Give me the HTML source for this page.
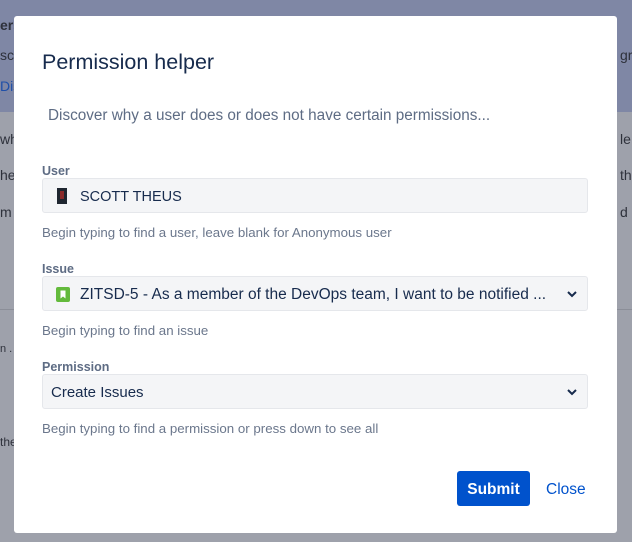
<!DOCTYPE html>
<html><head><style>
*{margin:0;padding:0;box-sizing:border-box}
body{width:632px;height:542px;overflow:hidden;font-family:"Liberation Sans",sans-serif;background:#9ea1ab;position:relative}
.top{position:absolute;left:0;top:0;width:632px;height:112px;background:#7f87a5}
.line{position:absolute;left:0;top:309px;width:632px;height:1px;background:#8b8e98}
.bg{position:absolute;font-size:14px;color:#2e313b}
.modal{position:absolute;left:14px;top:16px;width:603px;height:517px;background:#fff;border-radius:3px}
.a{position:absolute}
h1{position:absolute;left:28px;top:34px;font-size:21.5px;font-weight:normal;color:#172b4d}
.desc{left:34px;top:91px;font-size:15.3px;color:#5e6c84}
.lbl{font-size:12.5px;color:#5e6c84;font-weight:bold;left:28px}
.box{left:28px;width:546px;height:35px;background:#f4f5f7;border:1px solid #e5e7eb;border-radius:3px;font-size:14.5px;color:#172b4d;line-height:36px}
.help{left:28px;font-size:13.3px;color:#6b778c}
.chev{position:absolute;right:9px;top:12px}
.btn{left:443px;top:455px;width:73px;height:35px;background:#0052cc;border-radius:3px;color:#fff;font-weight:bold;font-size:15.5px;text-align:center;line-height:37px}
.close{left:532px;top:465px;font-size:15.5px;color:#0052cc}
</style></head><body>
<div class="top"></div><div class="line"></div>
<div class="bg" style="left:0;top:17px;font-weight:bold">ers</div>
<div class="bg" style="left:0;top:47px">sc</div>
<div class="bg" style="left:0;top:78px;color:#1f4fa8">Dis</div>
<div class="bg" style="left:0;top:131px">wh</div>
<div class="bg" style="left:0;top:167px">he</div>
<div class="bg" style="left:0;top:204px">m</div>
<div class="bg" style="left:0;top:343px;font-size:11px">n .</div>
<div class="bg" style="left:0;top:435px;font-size:12px">the</div>
<div class="bg" style="left:620px;top:47px">gr</div>
<div class="bg" style="left:620px;top:131px">le</div>
<div class="bg" style="left:620px;top:167px">th</div>
<div class="bg" style="left:620px;top:204px">d</div>
<div class="modal">
<h1>Permission helper</h1>
<div class="a desc">Discover why a user does or does not have certain permissions...</div>
<div class="a lbl" style="top:148px">User</div>
<div class="a box" style="top:162px"><span style="position:absolute;left:14px;top:9px;width:10px;height:16px;background:#1f2630"><span style="position:absolute;left:3px;top:3px;width:4px;height:8px;background:#8a2a2a"></span></span><span style="position:absolute;left:37px">SCOTT THEUS</span></div>
<div class="a help" style="top:209px">Begin typing to find a user, leave blank for Anonymous user</div>
<div class="a lbl" style="top:246px">Issue</div>
<div class="a box" style="top:260px"><span style="position:absolute;left:13px;top:10px;width:14px;height:15px;background:#63ba3c;border-radius:2px"><svg width="14" height="15" style="position:absolute;left:0;top:0"><path d="M4.5 3.5h5v8l-2.5-2-2.5 2z" fill="#fff"/></svg></span><span style="position:absolute;left:37px;font-size:15.5px">ZITSD-5 - As a member of the DevOps team, I want to be notified ...</span><svg class="chev" width="12" height="10"><path d="M2 3l4 4 4-4" stroke="#172b4d" stroke-width="2" fill="none"/></svg></div>
<div class="a help" style="top:307px">Begin typing to find an issue</div>
<div class="a lbl" style="top:344px">Permission</div>
<div class="a box" style="top:358px"><span style="position:absolute;left:8px;font-size:15px">Create Issues</span><svg class="chev" width="12" height="10"><path d="M2 3l4 4 4-4" stroke="#172b4d" stroke-width="2" fill="none"/></svg></div>
<div class="a help" style="top:405px">Begin typing to find a permission or press down to see all</div>
<div class="a btn">Submit</div>
<div class="a close">Close</div>
</div>
</body></html>
